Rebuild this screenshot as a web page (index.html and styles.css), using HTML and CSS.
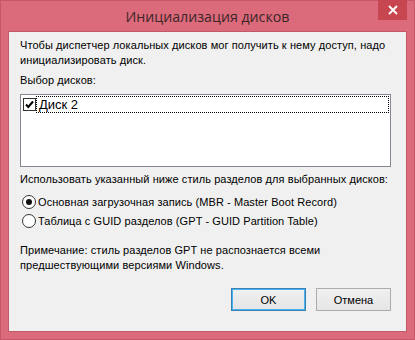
FILE: index.html
```html
<!DOCTYPE html>
<html lang="ru">
<head>
  <meta charset="UTF-8" />
  <title>Инициализация дисков</title>
  <link rel="stylesheet" href="styles.css">
</head>
<body>

  <div class="window">
    <div class="titlebar">
      <div class="title">Инициализация дисков</div>
      <div class="close">
        <svg width="10" height="10" viewBox="0 0 10 10">
          <path d="M1 1 L9 9 M9 1 L1 9" stroke="#fff" stroke-width="1.8" fill="none"/>
        </svg>
      </div>
    </div>

    <div class="client">
      <p class="intro">Чтобы диспетчер локальных дисков мог получить к нему доступ, надо инициализировать диск.</p>

      <div class="label">Выбор дисков:</div>
      <div class="listbox">
        <div class="item">
          <span class="check">
            <svg width="11" height="11" viewBox="0 0 11 11">
              <path d="M2 5.5 L4.3 8 L9 2.5" stroke="#000" stroke-width="2" fill="none"/>
            </svg>
          </span>
          <span class="focus">Диск 2</span>
        </div>
      </div>

      <div class="label style-label">Использовать указанный ниже стиль разделов для выбранных дисков:</div>
      <div class="radio-row first">
        <span class="radio on"></span>
        <span>Основная загрузочная запись (MBR - Master Boot Record)</span>
      </div>
      <div class="radio-row">
        <span class="radio"></span>
        <span>Таблица с GUID разделов (GPT - GUID Partition Table)</span>
      </div>

      <p class="note">Примечание: стиль разделов GPT не распознается всеми<br>предшествующими версиями Windows.</p>

      <div class="buttons">
        <button class="btn default">OK</button>
        <button class="btn">Отмена</button>
      </div>
    </div>
  </div>

</body>
</html>
```

FILE: styles.css
```css
body {
  margin: 0;
  padding: 0;
  font-family: 'Liberation Sans', Arial, sans-serif;
  font-size: 11px;
  letter-spacing: 0.08px;
  color: #000;
}

.window {
  width: 415px;
  height: 340px;
  box-sizing: border-box;
  background: #db6a7b;
  border: 1px solid #c75668;
  display: flex;
  flex-direction: column;
}

.titlebar {
  height: 30px;
  display: flex;
  position: relative;
  justify-content: center;
}

.title {
  font-family: 'Open Sans', 'Noto Sans', sans-serif;
  font-size: 14.2px;
  letter-spacing: 0;
  color: #3b2628;
  line-height: 31px;
}

.close {
  position: absolute;
  top: -1px;
  right: 7px;
  width: 29px;
  height: 20px;
  background: #c8464f;
  display: flex;
  align-items: center;
  justify-content: center;
}

.client {
  margin: 0 7px 7px 7px;
  flex: 1;
  background: #f0f0f0;
  border: 1px solid #c2596a;
  padding: 6px 15px 0 11px;
  display: flex;
  flex-direction: column;
}

.intro {
  margin: 0;
  line-height: 15px;
}

.label {
  margin-top: 5px;
  line-height: 15px;
}

.listbox {
  margin-top: 6px;
  height: 70px;
  background: #fff;
  border: 1px solid #828790;
  padding: 1px 1px 0 2px;
}

.item {
  display: flex;
  align-items: center;
  height: 17px;
}

.check {
  width: 11px;
  height: 11px;
  border: 1px solid #333;
  background: #fff;
  display: flex;
}

.focus {
  flex: 1;
  height: 15px;
  line-height: 15px;
  border: 1px dotted #000;
  padding-left: 2px;
  font-size: 13px;
  letter-spacing: 0;
}

.style-label {
  margin-top: 5px;
}

.radio-row {
  display: flex;
  align-items: center;
  gap: 2px;
  height: 19px;
  padding-left: 2px;
}

.radio-row.first {
  margin-top: 5px;
}

.radio {
  width: 12px;
  height: 12px;
  border: 1px solid #333;
  border-radius: 50%;
  background: #fff;
  display: flex;
  align-items: center;
  justify-content: center;
}

.radio.on::after {
  content: "";
  width: 6px;
  height: 6px;
  border-radius: 50%;
  background: #111;
}

.note {
  margin: 13px 0 0 0;
  line-height: 15px;
}

.buttons {
  margin-top: 15px;
  display: flex;
  justify-content: flex-end;
  gap: 10px;
}

.btn {
  width: 75px;
  height: 23px;
  font-family: 'Liberation Sans', Arial, sans-serif;
  font-size: 11px;
  color: #000;
  background: linear-gradient(#f0f0f0, #e5e5e5);
  border: 1px solid #acacac;
  padding: 0;
}

.btn.default {
  border-color: #3c7fb1;
  box-shadow: inset 0 0 0 1px #48b3f0;
}
```
